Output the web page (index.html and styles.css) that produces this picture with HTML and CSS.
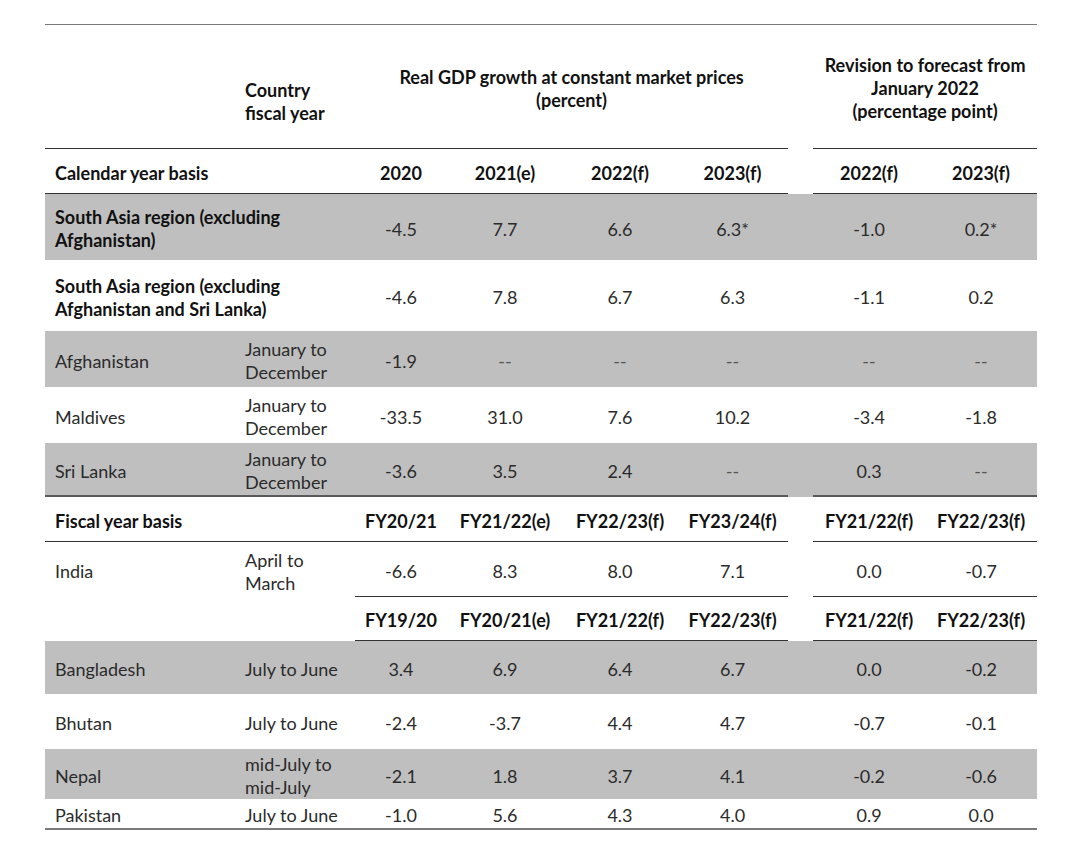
FILE: index.html
```html
<!DOCTYPE html>
<html>
<head>
<meta charset="utf-8">
<link rel="stylesheet" href="styles.css">
</head>
<body>
<table class="t">
  <colgroup>
    <col class="w-c1"><col class="w-c2"><col class="w-c3"><col class="w-c4"><col class="w-c5"><col class="w-c6"><col class="w-gap"><col class="w-c7"><col class="w-c8">
  </colgroup>
  <tr class="r-head">
    <td class="bb"></td>
    <td class="bb lbl hd country">Country<br>fiscal year</td>
    <td class="bb hd" colspan="4">Real GDP growth at constant market prices<br>(percent)</td>
    <td class="gap"></td>
    <td class="bb hd" colspan="2">Revision to forecast from<br>January 2022<br>(percentage point)</td>
  </tr>
  <tr class="r-sub">
    <td class="bb lbl b" colspan="2">Calendar year basis</td>
    <td class="bb b">2020</td><td class="bb b">2021(e)</td><td class="bb b">2022(f)</td><td class="bb b">2023(f)</td>
    <td class="gap"></td>
    <td class="bb b">2022(f)</td><td class="bb b">2023(f)</td>
  </tr>
  <tr class="gray r-sa1">
    <td class="lbl b" colspan="2">South Asia region (excluding<br>Afghanistan)</td>
    <td>-4.5</td><td>7.7</td><td>6.6</td><td>6.3*</td><td class="gap"></td><td>-1.0</td><td>0.2*</td>
  </tr>
  <tr class="r-sa2">
    <td class="lbl b" colspan="2">South Asia region (excluding<br>Afghanistan and Sri Lanka)</td>
    <td>-4.6</td><td>7.8</td><td>6.7</td><td>6.3</td><td class="gap"></td><td>-1.1</td><td>0.2</td>
  </tr>
  <tr class="gray r-afg">
    <td class="lbl">Afghanistan</td><td class="lbl">January to<br>December</td>
    <td>-1.9</td><td class="dash">--</td><td class="dash">--</td><td class="dash">--</td><td class="gap"></td><td class="dash">--</td><td class="dash">--</td>
  </tr>
  <tr class="r-mdv">
    <td class="lbl">Maldives</td><td class="lbl">January to<br>December</td>
    <td>-33.5</td><td>31.0</td><td>7.6</td><td>10.2</td><td class="gap"></td><td>-3.4</td><td>-1.8</td>
  </tr>
  <tr class="gray r-sl">
    <td class="bb2 lbl">Sri Lanka</td><td class="bb2 lbl">January to<br>December</td>
    <td class="bb2">-3.6</td><td class="bb2">3.5</td><td class="bb2">2.4</td><td class="bb2 dash">--</td><td class="gap"></td><td class="bb2">0.3</td><td class="bb2 dash">--</td>
  </tr>
  <tr class="r-sub">
    <td class="bb lbl b" colspan="2">Fiscal year basis</td>
    <td class="bb b">FY20/21</td><td class="bb b">FY21/22(e)</td><td class="bb b">FY22/23(f)</td><td class="bb b">FY23/24(f)</td>
    <td class="gap"></td>
    <td class="bb b">FY21/22(f)</td><td class="bb b">FY22/23(f)</td>
  </tr>
  <tr class="r-ind">
    <td class="lbl">India</td><td class="lbl">April to<br>March</td>
    <td class="bb">-6.6</td><td class="bb">8.3</td><td class="bb">8.0</td><td class="bb">7.1</td><td class="gap"></td><td class="bb">0.0</td><td class="bb">-0.7</td>
  </tr>
  <tr class="r-sub2">
    <td></td><td></td>
    <td class="bb b">FY19/20</td><td class="bb b">FY20/21(e)</td><td class="bb b">FY21/22(f)</td><td class="bb b">FY22/23(f)</td>
    <td class="gap"></td>
    <td class="bb b">FY21/22(f)</td><td class="bb b">FY22/23(f)</td>
  </tr>
  <tr class="gray r-bgd">
    <td class="lbl">Bangladesh</td><td class="lbl">July to June</td>
    <td>3.4</td><td>6.9</td><td>6.4</td><td>6.7</td><td class="gap"></td><td>0.0</td><td>-0.2</td>
  </tr>
  <tr class="r-btn">
    <td class="lbl">Bhutan</td><td class="lbl">July to June</td>
    <td>-2.4</td><td>-3.7</td><td>4.4</td><td>4.7</td><td class="gap"></td><td>-0.7</td><td>-0.1</td>
  </tr>
  <tr class="gray r-npl">
    <td class="lbl">Nepal</td><td class="lbl">mid-July to<br>mid-July</td>
    <td>-2.1</td><td>1.8</td><td>3.7</td><td>4.1</td><td class="gap"></td><td>-0.2</td><td>-0.6</td>
  </tr>
  <tr class="r-pak">
    <td class="lbl">Pakistan</td><td class="lbl">July to June</td>
    <td>-1.0</td><td>5.6</td><td>4.3</td><td>4.0</td><td class="gap"></td><td>0.9</td><td>0.0</td>
  </tr>
</table>
</body>
</html>
```

FILE: styles.css
```css
html, body {
  margin: 0;
  padding: 0;
  background: #ffffff;
}

body {
  padding: 24px 0 0 45px;
  font-family: Lato, "Noto Sans", sans-serif;
  font-size: 18px;
  line-height: 23px;
  color: #2b2b2b;
}

.t {
  border-collapse: separate;
  border-spacing: 0;
  table-layout: fixed;
  width: 992px;
  border-top: 1px solid #7a7a7a;
  border-bottom: 2px solid #7a7a7a;
}

.w-c1 { width: 190px; }
.w-c2 { width: 120px; }
.w-c3 { width: 92px; }
.w-c4 { width: 116px; }
.w-c5 { width: 114px; }
.w-c6 { width: 111px; }
.w-gap { width: 25px; }
.w-c7 { width: 112px; }
.w-c8 { width: 112px; }

.t td {
  padding: 4px 0 0 0;
  text-align: center;
  vertical-align: middle;
  white-space: nowrap;
}

.t td.lbl {
  text-align: left;
  padding-left: 10px;
}

.t td.b,
.t td.hd {
  font-weight: 700;
  color: #111111;
}

.t td.country {
  padding-top: 30px;
}

.t td.bb {
  border-bottom: 1px solid #333333;
}

.t td.bb2 {
  border-bottom: 2px solid #5a5a5a;
}

.t td.dash {
  color: #555555;
}

.gray td {
  background: #bfbfbf;
}

.r-head { height: 124px; }
.r-sub { height: 45px; }
.r-sa1 { height: 66px; }
.r-sa2 { height: 71px; }
.r-afg { height: 56px; }
.r-mdv { height: 56px; }
.r-sl { height: 54px; }
.r-ind { height: 55px; }
.r-sub2 { height: 44px; }
.r-bgd { height: 53px; }
.r-btn { height: 55px; }
.r-npl { height: 47px; }
.r-pak { height: 29px; }
```
